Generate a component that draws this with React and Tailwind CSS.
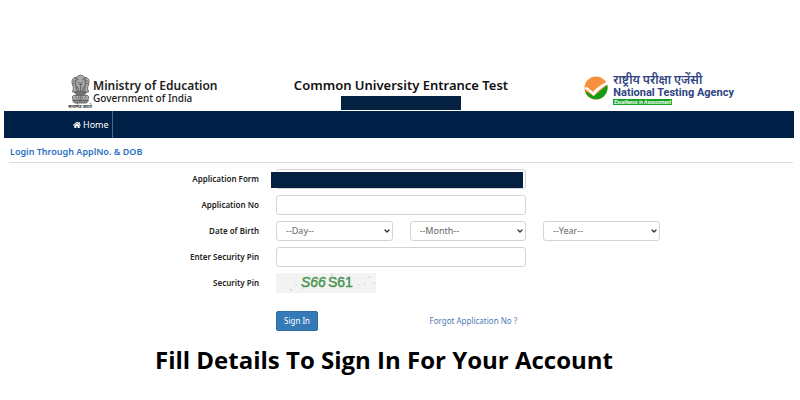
import { FaHome } from 'react-icons/fa'
import { ChevronDown } from 'lucide-react'

const fieldClass = 'block h-5 w-full rounded-[3px] border border-[#d4d4d4] bg-white px-[9px] text-[9px] text-[#666] outline-none'

function Emblem() {
  return (
    <svg viewBox="0 0 50 70" className="h-[35px] w-[25px] shrink-0" fill="none" stroke="#555" strokeWidth="1.6">
      <path d="M17 6Q25-1 33 6L35 20 31 35H19L15 20Z" fill="#aaa" />
      <path d="M16 7Q7 7 8 18L11 28 9 36H17L15 21Z" fill="#b0b0b0" />
      <path d="M34 7Q43 7 42 18L39 28 41 36H33L35 21Z" fill="#b0b0b0" />
      <path d="M18 9L22 12M28 12L32 9M20 16L25 19 30 16M21 21H29M19 25L22 34M31 25L28 34M25 20V34M10 15L15 13M40 15L35 13M9 20L14 19M41 20L36 19" strokeWidth="1.6" />
      <path d="M13 36H37L34 41H16Z" fill="#777" />
      <rect x="9" y="43" width="32" height="9" rx="3" fill="#bbb" />
      <circle cx="25" cy="47" r="4" fill="#eee" />
      <path d="M25 43V51M21 47H29M12 49L16 45 18 50M32 50L35 45 38 49" strokeWidth="1.4" />
      <path d="M9 53H41L37 58H13Z" fill="#888" />
      <text x="24" y="68" textAnchor="middle" fontSize="9" fontWeight="700" fill="#333" stroke="none">सत्यमेव जयते</text>
    </svg>
  )
}

function NtaMark() {
  return (
    <svg viewBox="0 0 24 24" className="size-6 shrink-0">
      <circle cx="12" cy="12" r="11.5" fill="#f7913d" />
      <path d="M1 15L10 20 23.2 9A11.5 11.5 0 0 1 1 15Z" fill="#109b18" />
      <path d="M0 12L3 11 9 16Q15 9 23 6L24 8Q16 12 9.500 20Q5 15 0 12Z" fill="#fff" />
    </svg>
  )
}

function SelectBox({ id, label, placeholder }) {
  return (
    <div className="relative">
      <select id={id} aria-label={label} className={`${fieldClass} appearance-none`}>
        <option>{placeholder}</option>
      </select>
      <ChevronDown size={8} strokeWidth={4} className="pointer-events-none absolute right-[2px] top-[6px] text-[#333]" />
    </div>
  )
}

function RowLabel({ htmlFor, children }) {
  return (
    <label htmlFor={htmlFor} className="col-span-2 text-right text-[8px] font-semibold leading-5 text-[#222]">
      {children}
    </label>
  )
}

function Captcha() {
  return (
    <svg viewBox="0 0 100 20" role="img" aria-label="Security Pin" className="block h-5 w-[100px] bg-[#f3f3f3]">
      <g fill="#c5d5c5">
        <circle cx="15" cy="17" r="1" />
        <circle cx="20" cy="12" r="0.8" />
        <circle cx="27" cy="15" r="0.8" />
        <circle cx="56" cy="2" r="1" />
        <circle cx="72" cy="4" r="0.8" />
        <circle cx="83" cy="12" r="0.8" />
        <circle cx="89" cy="11" r="0.8" />
        <circle cx="93" cy="4" r="0.8" />
        <circle cx="98" cy="10" r="0.8" />
      </g>
      <text x="25" y="14" fill="#479351" fontSize="14" fontFamily="Liberation Sans, sans-serif">
        <tspan fontStyle="italic" stroke="#479351" strokeWidth="0.4">S66</tspan>
        <tspan x="52" stroke="#479351" strokeWidth="0.4">S61</tspan>
      </text>
    </svg>
  )
}

export default function App() {
  return (
    <div className="min-h-screen bg-white pt-[72px] font-['Noto_Sans',sans-serif] text-[#222]">
      <header className="grid h-[39px] grid-cols-[1fr_auto_1fr] items-start pl-[68px] pr-[66px]">
        <div className="flex pt-[2px]">
          <Emblem />
          <div className="pt-[5px]">
            <div className="text-[12px] font-semibold leading-[13px]">Ministry of Education</div>
            <div className="text-[10px] font-medium leading-[12px]">Government of India</div>
          </div>
        </div>
        <div className="flex flex-col items-center pt-[4px]">
          <h1 className="text-[13px] font-semibold leading-[18px] text-[#111]">Common University Entrance Test</h1>
          <div className="mt-[2px] h-[14px] w-[120px] bg-[#042142]" />
        </div>
        <div className="flex justify-end gap-[5px]">
          <div className="pt-[4px]">
            <NtaMark />
          </div>
          <div className="pt-[2px] font-['Roboto','Noto_Sans',sans-serif] text-[#2f4483]">
            <div className="text-[12px] font-semibold leading-[12px]">राष्ट्रीय परीक्षा एजेंसी</div>
            <div className="text-[11px] font-bold leading-[13px]">National Testing Agency</div>
            <div className="w-fit bg-[#16a321] px-[1px] text-[5px] font-bold leading-[6px] text-white italic">Excellence in Assessment</div>
          </div>
        </div>
      </header>

      <nav className="ml-1 mr-[6px] flex h-[27px] bg-[#002147] text-[9px] text-white">
        <a href="#home" className="flex items-center gap-[2px] border-r border-[#53667f] pl-[69px] pr-[3px]">
          <FaHome size={8} />
          Home
        </a>
      </nav>

      <main className="pl-[9px] pr-[7px]">
        <h2 className="border-b border-[#ddd] pb-[3px] pl-px pt-[7px] text-[9px] font-semibold leading-[14px] text-[#2a6fc4]">
          Login Through ApplNo. &amp; DOB
        </h2>

        <form className="mt-[6px]" onSubmit={(e) => e.preventDefault()}>
          <div className="grid grid-cols-6 gap-x-[17px] gap-y-[6px]">
            <RowLabel htmlFor="form">Application Form</RowLabel>
            <div className="relative col-span-2">
              <input id="form" type="text" className={fieldClass} />
              <div className="absolute -left-[5px] right-[3px] top-[3px] h-4 bg-[#042142]" />
            </div>
            <div className="col-span-2" />

            <RowLabel htmlFor="appno">Application No</RowLabel>
            <div className="col-span-2">
              <input id="appno" type="text" className={fieldClass} />
            </div>
            <div className="col-span-2" />

            <RowLabel htmlFor="day">Date of Birth</RowLabel>
            <SelectBox id="day" label="Day" placeholder="--Day--" />
            <SelectBox id="month" label="Month" placeholder="--Month--" />
            <SelectBox id="year" label="Year" placeholder="--Year--" />
            <div />

            <RowLabel htmlFor="pin">Enter Security Pin</RowLabel>
            <div className="col-span-2">
              <input id="pin" type="text" className={fieldClass} />
            </div>
            <div className="col-span-2" />

            <div className="col-span-2 text-right text-[8px] font-semibold leading-5">Security Pin</div>
            <div className="col-span-4">
              <Captcha />
            </div>
          </div>

          <div className="mt-[18px] grid grid-cols-6 items-center gap-x-[17px]">
            <div className="col-start-3">
              <button type="submit" className="block h-5 rounded-[2px] border border-[#2e6da4] bg-[#337ab7] px-[7px] text-[8px] leading-none text-white">
                Sign In
              </button>
            </div>
            <a href="#forgot" className="whitespace-nowrap pl-5 text-[8px] text-[#4b7db8]">Forgot Application No ?</a>
          </div>
        </form>
      </main>

      <p className="pr-8 pt-[12px] text-center font-['Open_Sans',sans-serif] text-[24px] font-bold leading-[34px] text-black">
        Fill Details To Sign In For Your Account
      </p>
    </div>
  )
}
